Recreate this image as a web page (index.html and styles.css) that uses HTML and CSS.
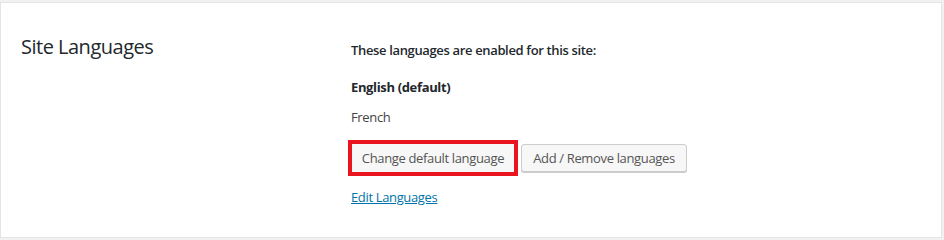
FILE: index.html
```html
<!DOCTYPE html>
<html>
<head>
<meta charset="utf-8">
<link rel="stylesheet" href="styles.css">
</head>
<body>
<div class="panel">
  <div class="label">Site Languages</div>
  <div class="content">
    <p class="intro">These languages are enabled for this site:</p>
    <ul class="langs">
      <li class="lang default">English (default)</li>
      <li class="lang">French</li>
    </ul>
    <div class="actions">
      <button class="button highlighted">Change default language</button>
      <button class="button">Add / Remove languages</button>
    </div>
    <a class="edit-link" href="#">Edit Languages</a>
  </div>
</div>
</body>
</html>
```
FILE: styles.css
```css
html, body {
  margin: 0;
  padding: 0;
}
body {
  background: #f1f1f1;
  font-family: "Open Sans", "Noto Sans", sans-serif;
  color: #444;
  font-size: 13px;
  letter-spacing: -0.35px;
  width: 944px;
  height: 240px;
  overflow: hidden;
}
.panel {
  margin-top: 2px;
  width: 940px;
  height: 234px;
  background: #fff;
  border: 1px solid #e5e5e5;
  display: grid;
  grid-template-columns: 350px 1fr;
  box-sizing: content-box;
}
.label {
  font-size: 20px;
  letter-spacing: -0.5px;
  color: #23282d;
  padding: 31px 0 0 20px;
  line-height: 26px;
}
.content {
  padding-top: 36px;
}
.intro {
  margin: 0;
  font-weight: 600;
  line-height: 22px;
  color: #23282d;
}
.langs {
  list-style: none;
  margin: 15px 0 0;
  padding: 0;
}
.lang {
  line-height: 22px;
  margin-bottom: 8px;
}
.lang.default {
  font-weight: 700;
  color: #23282d;
}
.actions {
  display: flex;
  gap: 3px;
  margin-top: 12px;
  align-items: center;
}
.button {
  font-family: inherit;
  font-size: 13px;
  letter-spacing: -0.35px;
  color: #555;
  background: #f7f7f7;
  border: 1px solid #ccc;
  border-radius: 3px;
  box-shadow: 0 1px 0 #ccc;
  height: 28px;
  width: 166px;
  line-height: 26px;
  padding: 0;
  margin: 0;
  text-align: center;
}
.button.highlighted {
  border: 4px solid #e8141f;
  border-radius: 0;
  box-shadow: none;
  height: 36px;
  width: 170px;
  line-height: 28px;
  margin-left: -3px;
}
.edit-link {
  display: inline-block;
  margin-top: 10px;
  color: #0073aa;
  text-decoration: underline;
  line-height: 22px;
}
```
